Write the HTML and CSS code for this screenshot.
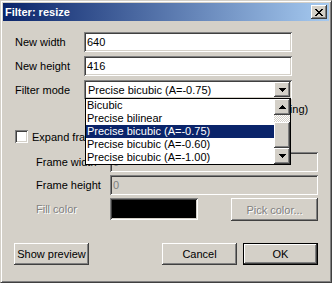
FILE: index.html
```html
<!DOCTYPE html>
<html lang="en">
<head>
    <meta charset="UTF-8">
    <title>Filter: resize</title>
    <link rel="stylesheet" href="styles.css">
</head>
<body>

<div class="window">
    <!-- Title bar -->
    <div class="titlebar">
        <span class="title">Filter: resize</span>
        <button class="close-btn">
            <svg width="8" height="7" viewBox="0 0 8 7"><path d="M0 0h2v1h-2zM6 0h2v1h-2zM1 1h2v1h-2zM5 1h2v1h-2zM2 2h4v1h-4zM3 3h2v1h-2zM2 4h4v1h-4zM1 5h2v1h-2zM5 5h2v1h-2zM0 6h2v1h-2zM6 6h2v1h-2z"/></svg>
        </button>
    </div>

    <div class="content">
        <!-- Size and mode -->
        <div class="size-grid">
            <label>New width</label>
            <input type="text" class="field" value="640">

            <label>New height</label>
            <input type="text" class="field" value="416">

            <label>Filter mode</label>
            <div class="combo">
                <span class="combo-text">Precise bicubic (A=-0.75)</span>
                <span class="raised arrow-btn">
                    <svg width="7" height="4" viewBox="0 0 7 4"><path d="M0 0h7v1h-1v1h-1v1h-1v1h-1v-1h-1v-1h-1v-1h-1z"/></svg>
                </span>

                <!-- Open dropdown list -->
                <div class="dropdown">
                    <ul class="options">
                        <li>Bicubic</li>
                        <li>Precise bilinear</li>
                        <li class="selected">Precise bicubic (A=-0.75)</li>
                        <li>Precise bicubic (A=-0.60)</li>
                        <li>Precise bicubic (A=-1.00)</li>
                    </ul>
                    <div class="scrollbar">
                        <span class="raised arrow-btn">
                            <svg width="7" height="4" viewBox="0 0 7 4"><path d="M3 0h1v1h1v1h1v1h1v1h-7v-1h1v-1h1v-1h1z"/></svg>
                        </span>
                        <span class="track"></span>
                        <span class="raised thumb"></span>
                        <span class="raised arrow-btn">
                            <svg width="7" height="4" viewBox="0 0 7 4"><path d="M0 0h7v1h-1v1h-1v1h-1v1h-1v-1h-1v-1h-1v-1h-1z"/></svg>
                        </span>
                    </div>
                </div>
            </div>
        </div>

        <div class="check-row aspect">
            <span class="checkbox"></span>
            <span>Preserve image aspect ratio (letterboxing)</span>
        </div>

        <div class="check-row expand">
            <span class="checkbox"></span>
            <span>Expand frame (centered)</span>
        </div>

        <!-- Frame options -->
        <div class="frame-grid">
            <label>Frame width</label>
            <input type="text" class="field" value="0" disabled>

            <label>Frame height</label>
            <input type="text" class="field" value="0" disabled>

            <label class="disabled">Fill color</label>
            <div class="fill-row">
                <span class="swatch"></span>
                <button class="btn pick" disabled>Pick color...</button>
            </div>
        </div>

        <div class="buttons">
            <button class="btn">Show preview</button>
            <button class="btn cancel">Cancel</button>
            <button class="btn default">OK</button>
        </div>
    </div>
</div>

</body>
</html>
```

FILE: styles.css
```css
* {
    box-sizing: border-box;
    margin: 0;
    padding: 0;
}

body {
    font-family: 'Liberation Sans', Arial, sans-serif;
    font-size: 11px;
    color: #000;
    background: #d4d0c8;
}

.window {
    width: 332px;
    height: 283px;
    background: #d4d0c8;
    border: 1px solid;
    border-color: #d4d0c8 #404040 #404040 #d4d0c8;
    box-shadow: inset 1px 1px #fff, inset -1px -1px #808080;
    padding: 2px;
}

/* Title bar */
.titlebar {
    height: 18px;
    display: flex;
    align-items: center;
    padding: 0 2px;
    background: linear-gradient(to right, #0a246a, #a6caf0);
    color: #fff;
    font-weight: bold;
}

.close-btn {
    margin-left: auto;
    width: 16px;
    height: 14px;
    border: none;
    background: #d4d0c8;
    display: flex;
    align-items: center;
    justify-content: center;
    box-shadow: inset -1px -1px #404040, inset 1px 1px #fff, inset -2px -2px #808080;
}

.raised {
    background: #d4d0c8;
    box-shadow: inset -1px -1px #404040, inset 1px 1px #fff, inset -2px -2px #808080;
}

.content {
    padding: 11px 11px 0 12px;
}

label {
    white-space: nowrap;
}

label.disabled,
.btn:disabled {
    color: #808080;
    text-shadow: 1px 1px #fff;
}

/* Sunken fields */
.field,
.combo,
.checkbox,
.swatch {
    box-shadow: inset 1px 1px #808080, inset -1px -1px #fff, inset 2px 2px #404040, inset -2px -2px #d4d0c8;
}

.field {
    height: 20px;
    width: 100%;
    border: none;
    padding: 0 3px;
    font: inherit;
    color: #000;
    background: #fff;
    outline: none;
}

.field:disabled {
    background: #d4d0c8;
    color: #808080;
}

.size-grid {
    display: grid;
    grid-template-columns: 69px 208px;
    grid-auto-rows: 20px;
    row-gap: 4px;
    align-items: center;
}

/* Combo box */
.combo {
    position: relative;
    align-self: start;
    height: 19px;
    display: flex;
    align-items: center;
    padding: 2px;
    background: #fff;
}

.combo-text {
    flex: 1;
    padding-left: 2px;
}

.arrow-btn {
    width: 16px;
    height: 15px;
    display: flex;
    align-items: center;
    justify-content: center;
}

.dropdown {
    position: absolute;
    top: 18px;
    left: 1px;
    width: 206px;
    height: 67px;
    border: 1px solid #000;
    background: #fff;
    display: flex;
    z-index: 2;
}

.options {
    list-style: none;
    flex: 1;
}

.options li {
    height: 13px;
    line-height: 13px;
    padding-left: 1px;
    white-space: nowrap;
}

.options li.selected {
    background: #0a246a;
    color: #fff;
}

.scrollbar {
    width: 16px;
    display: flex;
    flex-direction: column;
}

.scrollbar .arrow-btn {
    height: 16px;
}

.track {
    height: 7px;
    background: repeating-conic-gradient(#fff 0 25%, #d4d0c8 0 50%) 0 0 / 2px 2px;
}

.thumb {
    flex: 1;
}

/* Checkbox rows */
.check-row {
    display: flex;
    align-items: center;
    gap: 4px;
    height: 13px;
    white-space: nowrap;
}

.checkbox {
    width: 13px;
    height: 13px;
    background: #fff;
}

.aspect {
    margin-top: 2px;
    padding-left: 72px;
}

.expand {
    margin-top: 15px;
}

/* Frame options */
.frame-grid {
    margin-top: 9px;
    padding-left: 21px;
    display: grid;
    grid-template-columns: 74px 208px;
    grid-template-rows: 20px 20px 22px;
    row-gap: 3px;
    align-items: center;
}

.frame-grid .fill-row {
    margin-top: 1px;
    display: flex;
    align-items: flex-start;
}

.swatch {
    width: 88px;
    height: 22px;
    background: #000;
}

/* Buttons */
.btn {
    width: 75px;
    height: 22px;
    border: none;
    background: #d4d0c8;
    font: inherit;
    color: #000;
    box-shadow: inset -1px -1px #404040, inset 1px 1px #fff, inset -2px -2px #808080;
}

.btn.pick {
    margin-left: auto;
    width: 87px;
    height: 23px;
}

.btn.default {
    border: 1px solid #000;
}

.buttons {
    margin-top: 23px;
    margin-left: -1px;
    display: flex;
    gap: 6px;
}

.buttons .cancel {
    margin-left: auto;
}
```
